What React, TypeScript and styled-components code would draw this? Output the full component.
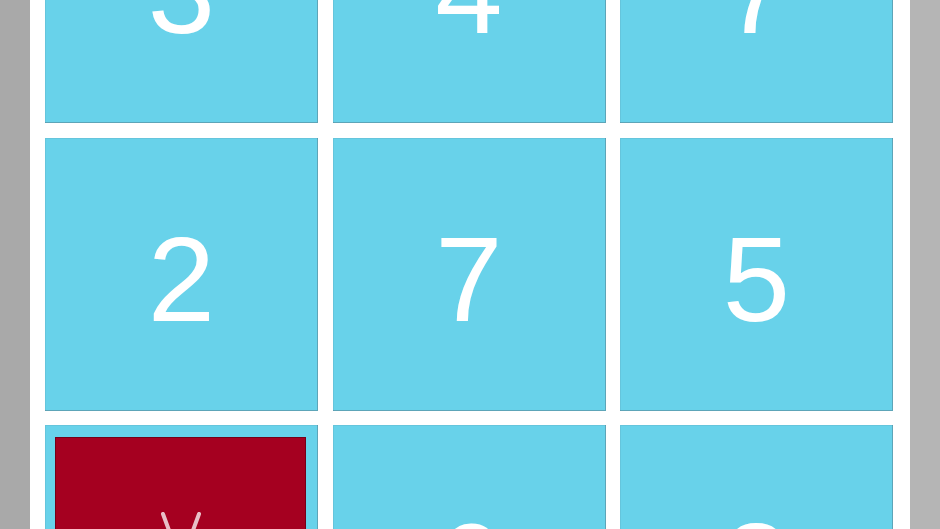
import React from "react";
import styled, { createGlobalStyle } from "styled-components";

const GlobalStyle = createGlobalStyle`
  html, body {
    margin: 0;
    padding: 0;
    background: #ffffff;
    overflow: hidden;
  }
  #root {
    width: 940px;
    height: 529px;
    overflow: hidden;
  }
`;

const Frame = styled.div`
  display: flex;
  width: 940px;
  height: 529px;
  overflow: hidden;
`;

const SideBar = styled.div<{ $tone: string }>`
  flex: 0 0 30px;
  background: ${(p) => p.$tone};
`;

const Board = styled.main`
  flex: 1;
  background: #ffffff;
  padding: 0 17px 0 15px;
  overflow: hidden;
`;

const Grid = styled.div`
  display: grid;
  grid-template-columns: repeat(3, 273px);
  grid-auto-rows: 273px;
  column-gap: 14.5px;
  row-gap: 14.5px;
  margin-top: -150px;
`;

const Tile = styled.div`
  position: relative;
  display: flex;
  align-items: center;
  justify-content: center;
  background: #68d2ea;
  box-shadow: inset -1px -1px 0 rgba(80, 110, 125, 0.45),
    inset 1px 1px 0 rgba(80, 110, 125, 0.12);
  box-sizing: border-box;
`;

const Digit = styled.span`
  font-family: "Liberation Sans", Arial, sans-serif;
  font-size: 121px;
  line-height: 1;
  color: #ffffff;
  padding-top: 10px;
`;

const Flagged = styled.div`
  position: absolute;
  left: 10px;
  top: 12px;
  width: 251px;
  height: 251px;
  background: #a50020;
  box-shadow: inset 0 0 0 1px rgba(70, 0, 15, 0.5);
  display: flex;
  align-items: center;
  justify-content: center;
`;

type Cell = { value?: number; flagged?: boolean };

const cells: Cell[] = [
  { value: 3 },
  { value: 4 },
  { value: 7 },
  { value: 2 },
  { value: 7 },
  { value: 5 },
  { flagged: true },
  { value: 6 },
  { value: 8 },
];

function Cross() {
  return (
    <svg width="60" height="110" viewBox="0 0 60 110" aria-hidden="true">
      <g stroke="#ffffff" strokeWidth="4" strokeLinecap="round" opacity="0.75">
        <line x1="12" y1="6" x2="48" y2="104" />
        <line x1="48" y1="6" x2="12" y2="104" />
      </g>
    </svg>
  );
}

export default function App() {
  return (
    <>
      <GlobalStyle />
      <Frame>
        <SideBar $tone="#a9a9a9" />
        <Board>
          <Grid>
            {cells.map((c, i) => (
              <Tile key={i}>
                {c.flagged ? (
                  <Flagged>
                    <Cross />
                  </Flagged>
                ) : (
                  <Digit>{c.value}</Digit>
                )}
              </Tile>
            ))}
          </Grid>
        </Board>
        <SideBar $tone="#b5b5b5" />
      </Frame>
    </>
  );
}
